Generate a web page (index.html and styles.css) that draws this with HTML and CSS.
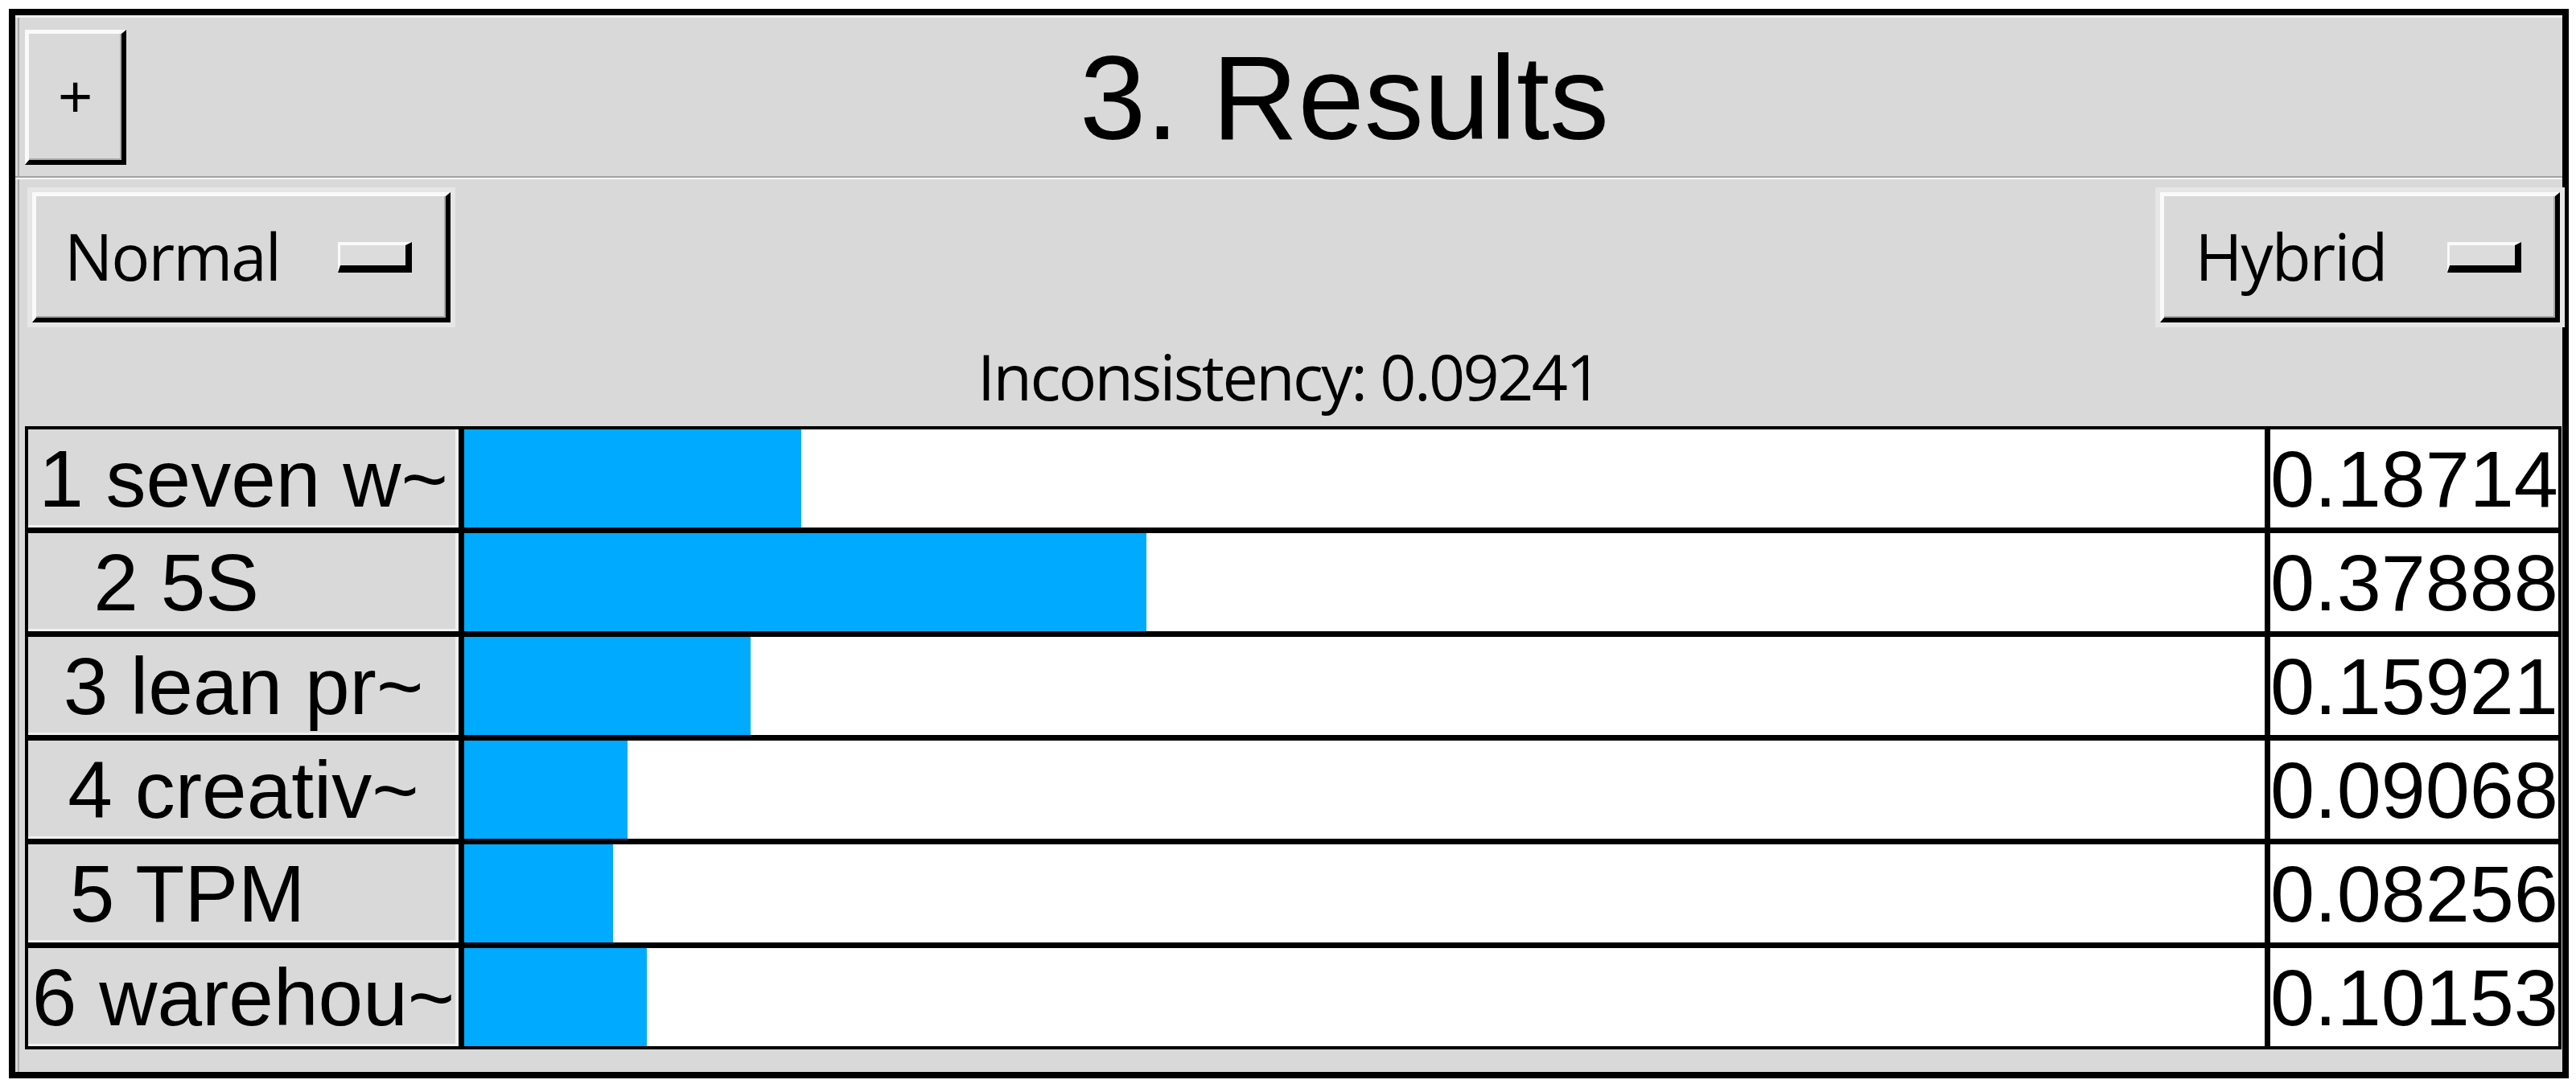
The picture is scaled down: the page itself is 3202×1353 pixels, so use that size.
FILE: index.html
```html
<!DOCTYPE html>
<html>
<head>
<meta charset="utf-8">
<title>3. Results</title>
<link rel="stylesheet" href="styles.css">
</head>
<body>
<div class="frame">
  <div class="header">
    <div class="plus">+</div>
    <div class="title">3. Results</div>
  </div>
  <div class="sep"></div>
  <div class="controls">
    <div class="menubutton mb-normal"><span class="mb-text">Normal</span><span class="indicator"></span></div>
    <div class="menubutton mb-hybrid"><span class="mb-text">Hybrid</span><span class="indicator"></span></div>
  </div>
  <div class="status">Inconsistency: 0.09241</div>
  <div class="results">
    <div class="name">1 seven w~</div>
    <div class="barcell"><div class="bar" style="width:18.714%"></div></div>
    <div class="value">0.18714</div>

    <div class="name">2 5S      </div>
    <div class="barcell"><div class="bar" style="width:37.888%"></div></div>
    <div class="value">0.37888</div>

    <div class="name">3 lean pr~</div>
    <div class="barcell"><div class="bar" style="width:15.921%"></div></div>
    <div class="value">0.15921</div>

    <div class="name">4 creativ~</div>
    <div class="barcell"><div class="bar" style="width:9.068%"></div></div>
    <div class="value">0.09068</div>

    <div class="name">5 TPM     </div>
    <div class="barcell"><div class="bar" style="width:8.256%"></div></div>
    <div class="value">0.08256</div>

    <div class="name">6 warehou~</div>
    <div class="barcell"><div class="bar" style="width:10.153%"></div></div>
    <div class="value">0.10153</div>
  </div>
</div>
</body>
</html>
```

FILE: styles.css
```css
html, body {
  margin: 0;
  padding: 0;
  background: #ffffff;
}

.frame {
  margin: 11px 0 0 11px;
  width: 3166px;
  height: 1314px;
  border: 8px solid #000000;
  background: #d9d9d9;
  display: flex;
  flex-direction: column;
  box-shadow: inset 0 3px 0 #eeeeee, inset 3px 0 0 #d9d9d9, inset 5px 0 0 #ababab;
  font-family: "Liberation Sans", Arial, sans-serif;
  color: #000000;
}

/* header */
.header {
  height: 200px;
  display: flex;
  align-items: flex-start;
  padding-left: 12px;
  flex: none;
}

.plus {
  margin-top: 18px;
  width: 126px;
  height: 168px;
  box-sizing: border-box;
  border-style: solid;
  border-width: 5px 6px 6px 5px;
  border-color: #fafafa #000000 #000000 #fafafa;
  box-shadow: inset -2px -2px 0 #a8a8a8;
  display: flex;
  align-items: center;
  justify-content: center;
  font-family: "Liberation Sans", Arial, sans-serif;
  font-size: 74px;
  line-height: 1;
  flex: none;
}

.title {
  flex: 1;
  align-self: center;
  text-align: center;
  font-size: 148px;
  line-height: 1;
  padding-top: 6px;
}

.sep {
  height: 2px;
  border-top: 2px solid #a3a3a3;
  background: #f7f7f7;
  flex: none;
}

/* option menus */
.controls {
  display: flex;
  justify-content: space-between;
  padding: 16px 3px 0 21px;
  flex: none;
}

.menubutton {
  height: 162px;
  box-sizing: border-box;
  border-style: solid;
  border-width: 5px 6px 6px 5px;
  border-color: #fafafa #000000 #000000 #fafafa;
  box-shadow: 0 0 0 6px #e6e6e6, inset -2px -2px 0 #a8a8a8;
  display: flex;
  align-items: center;
  padding-right: 42px;
  font-family: "Open Sans", "Noto Sans", sans-serif;
  font-size: 80px;
  letter-spacing: -2px;
}

.mb-normal {
  width: 520px;
}

.mb-hybrid {
  width: 497px;
}

.mb-text {
  flex: 1;
  text-align: center;
  margin-right: 37px;
  line-height: 1;
  padding-bottom: 4px;
}

.indicator {
  width: 92px;
  height: 38px;
  box-sizing: border-box;
  border-style: solid;
  border-width: 4px 8px 9px 3px;
  border-color: #fafafa #000000 #000000 #fafafa;
  background: #dcdcdc;
  flex: none;
}

.status {
  height: 129px;
  display: flex;
  align-items: center;
  justify-content: center;
  font-family: "Open Sans", "Noto Sans", sans-serif;
  font-size: 79px;
  letter-spacing: -2.6px;
  flex: none;
  padding-top: 4px;
  box-sizing: border-box;
}

/* results table */
.results {
  margin: 0 1px 0 12px;
  padding: 1px;
  background: #000000;
  display: grid;
  grid-template-columns: 541px 2244px 1fr;
  grid-auto-rows: 128px;
  gap: 1px;
  flex: none;
}

.name,
.barcell,
.value {
  border: 3px solid #000000;
  box-sizing: border-box;
}

.name {
  background: #d9d9d9;
  box-shadow: inset -4px -3px 0 #f0f0f0;
  display: flex;
  align-items: center;
  justify-content: center;
  white-space: pre;
  font-size: 100px;
  line-height: 1;
  overflow: hidden;
}

.barcell {
  background: #ffffff;
  display: flex;
}

.bar {
  height: 100%;
  background: #00aaff;
}

.value {
  background: #ffffff;
  display: flex;
  align-items: center;
  justify-content: center;
  font-size: 99px;
  line-height: 1;
  overflow: hidden;
  white-space: nowrap;
}
```
